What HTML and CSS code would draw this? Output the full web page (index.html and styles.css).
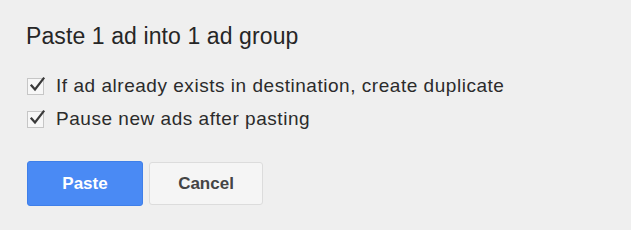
FILE: index.html
```html
<!DOCTYPE html>
<html>
<head>
<meta charset="utf-8">
<link rel="stylesheet" href="styles.css">
</head>
<body>
<div class="dialog">
  <h1 class="title">Paste 1 ad into 1 ad group</h1>
  <div class="options">
    <label class="option">
      <span class="box"><svg width="18" height="18" viewBox="0 0 18 18"><path d="M3.5 9.5 L7 13.5 L15.5 2.5" fill="none" stroke="#3a3a3a" stroke-width="2.2" stroke-linecap="square" stroke-linejoin="miter"/></svg></span>
      <span>If ad already exists in destination, create duplicate</span>
    </label>
    <label class="option">
      <span class="box"><svg width="18" height="18" viewBox="0 0 18 18"><path d="M3.5 9.5 L7 13.5 L15.5 2.5" fill="none" stroke="#3a3a3a" stroke-width="2.2" stroke-linecap="square" stroke-linejoin="miter"/></svg></span>
      <span>Pause new ads after pasting</span>
    </label>
  </div>
  <div class="actions">
    <button class="btn primary">Paste</button>
    <button class="btn secondary">Cancel</button>
  </div>
</div>
</body>
</html>
```

FILE: styles.css
```css
html, body {
  margin: 0;
  padding: 0;
  background: #efefef;
}
body {
  font-family: "Liberation Sans", Arial, sans-serif;
  color: #333;
}
.dialog {
  padding: 22px 0 0 26px;
}
.title {
  margin: 0;
  font-size: 23px;
  font-weight: normal;
  line-height: 28px;
  letter-spacing: 0.1px;
  color: #262626;
}
.options {
  margin-top: 25px;
  display: flex;
  flex-direction: column;
  gap: 11px;
}
.option {
  display: flex;
  align-items: center;
  font-size: 19px;
  line-height: 22px;
  letter-spacing: 0.53px;
  color: #2b2b2b;
}
.box {
  position: relative;
  width: 15px;
  height: 15px;
  border: 1px solid #c6c6c6;
  background: #f7f7f7;
  margin-right: 12px;
  margin-left: 1px;
  box-sizing: content-box;
}
.box svg {
  position: absolute;
  left: 0px;
  top: -3px;
}
.actions {
  margin-top: 31px;
  display: flex;
  align-items: flex-start;
  gap: 6px;
}
.btn {
  font-family: "Liberation Sans", Arial, sans-serif;
  font-weight: bold;
  font-size: 17px;
  height: 45px;
  border-radius: 3px;
  padding: 0;
  cursor: pointer;
}
.primary {
  width: 116px;
  margin-left: 1px;
  background: #4a8af4;
  border: 1px solid #3f7fe9;
  color: #fff;
}
.secondary {
  width: 114px;
  height: 43px;
  margin-top: 1px;
  background: #f5f5f5;
  border: 1px solid #dcdcdc;
  color: #444;
}
```
